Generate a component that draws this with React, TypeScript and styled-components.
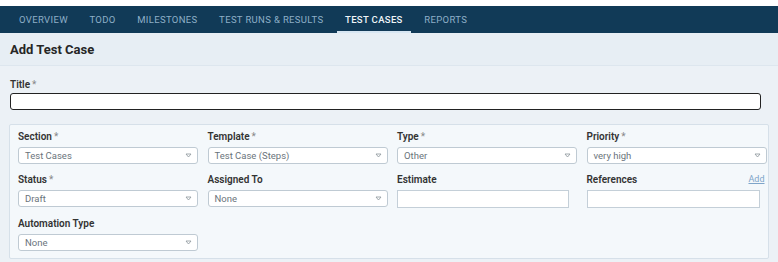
import * as React from 'react'
import styled, { createGlobalStyle } from 'styled-components'

const GlobalStyle = createGlobalStyle`
  body {
    margin: 0;
    background: #ffffff;
    font-family: Roboto, 'Liberation Sans', sans-serif;
  }
`

const Page = styled.div`
  width: 778px;
  height: 262px;
  box-sizing: border-box;
  background: #ecf1f6;
  display: flex;
  flex-direction: column;
  overflow: hidden;
  border-top: 6px solid #ffffff;
`

const NavBar = styled.nav`
  height: 27px;
  background: #113a57;
  display: flex;
  align-items: stretch;
  padding-left: 11px;
  gap: 5.5px;
`

const Tab = styled.div<{ $active?: boolean }>`
  display: flex;
  align-items: center;
  padding: 2px 8px 0;
  font-size: 9.5px;
  letter-spacing: 0.35px;
  font-weight: ${(p) => (p.$active ? 500 : 400)};
  color: ${(p) => (p.$active ? '#eef4f8' : '#8eafc7')};
  box-sizing: border-box;
  border-bottom: 2px solid ${(p) => (p.$active ? '#d7e6f2' : 'transparent')};
`

const Header = styled.div`
  height: 32px;
  background: #e7eef4;
  border-bottom: 1px solid #dde6ee;
  display: flex;
  align-items: center;
  padding-left: 10px;
  font-size: 13px;
  font-weight: 700;
  color: #262626;
`

const Body = styled.div`
  padding: 12px 17px 0 10px;
  display: flex;
  flex-direction: column;
`

const Label = styled.div`
  font-size: 10px;
  font-weight: 600;
  color: #333;
  height: 13px;
  line-height: 13px;
  display: flex;
  justify-content: space-between;
  align-items: flex-end;
`

const Req = styled.span`
  color: #888;
  font-weight: 400;
  margin-left: 2px;
`

const TitleInput = styled.div`
  margin-top: 2px;
  height: 15px;
  border: 1.5px solid #222;
  border-radius: 3px;
  background: #fff;
`

const Panel = styled.div`
  margin: 14px -8px 0 -1px;
  height: 135px;
  box-sizing: border-box;
  background: #f4f8fb;
  border: 1px solid #d6e0e9;
  border-radius: 2px;
  padding: 5px 4px 0 8px;
  display: grid;
  grid-template-columns: repeat(4, 180px);
  column-gap: 9.5px;
  row-gap: 9px;
  align-content: start;
`

const Field = styled.div`
  display: flex;
  flex-direction: column;
  gap: 4px;
`

const Select = styled.div`
  height: 17px;
  box-sizing: border-box;
  border: 1px solid #bfcad3;
  border-radius: 3px;
  background: #fff;
  display: flex;
  align-items: center;
  justify-content: space-between;
  padding: 0 5px 0 6px;
  font-size: 9.5px;
  color: #6a747b;
`

const TextBox = styled.div<{ $width: number }>`
  width: ${(p) => p.$width}px;
  height: 18px;
  box-sizing: border-box;
  border: 1px solid #c4cfd8;
  background: #fff;
`

const AddLink = styled.span`
  font-size: 9px;
  font-weight: 400;
  color: #7ea5c9;
  text-decoration: underline;
  margin-right: 2px;
`

const Caret = () => (
  <svg width='7' height='5' viewBox='0 0 7 5'>
    <path d='M1 1 H6 L3.5 4 Z' fill='none' stroke='#8a949b' strokeWidth='0.8' />
  </svg>
)

const tabs = ['OVERVIEW', 'TODO', 'MILESTONES', 'TEST RUNS & RESULTS', 'TEST CASES', 'REPORTS']

const SelectField = ({ label, value, req }: { label: string; value: string; req?: boolean }) => (
  <Field>
    <Label>
      <span>
        {label}
        {req && <Req>*</Req>}
      </span>
    </Label>
    <Select>
      <span>{value}</span>
      <Caret />
    </Select>
  </Field>
)

export default function App() {
  return (
    <Page>
      <GlobalStyle />
      <NavBar>
        {tabs.map((t) => (
          <Tab key={t} $active={t === 'TEST CASES'}>
            {t}
          </Tab>
        ))}
      </NavBar>
      <Header>Add Test Case</Header>
      <Body>
        <Label>
          <span>
            Title<Req>*</Req>
          </span>
        </Label>
        <TitleInput />
        <Panel>
          <SelectField label='Section' value='Test Cases' req />
          <SelectField label='Template' value='Test Case (Steps)' req />
          <SelectField label='Type' value='Other' req />
          <SelectField label='Priority' value='very high' req />
          <SelectField label='Status' value='Draft' req />
          <SelectField label='Assigned To' value='None' />
          <Field>
            <Label>
              <span>Estimate</span>
            </Label>
            <TextBox $width={172} />
          </Field>
          <Field>
            <Label>
              <span>References</span>
              <AddLink>Add</AddLink>
            </Label>
            <TextBox $width={173} />
          </Field>
          <SelectField label='Automation Type' value='None' />
        </Panel>
      </Body>
    </Page>
  )
}
